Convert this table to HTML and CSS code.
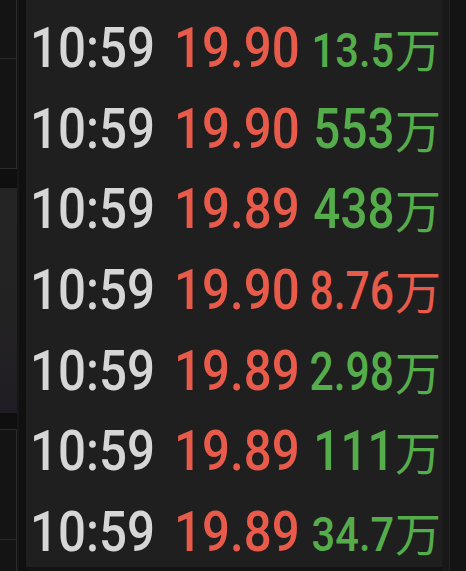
FILE: index.html
```html
<!DOCTYPE html>
<html lang="zh">
<head>
<meta charset="utf-8">
<link rel="stylesheet" href="styles.css">
</head>
<body>
<div class="page">
  <div class="side-left">
    <div class="sl-panel sl-a"></div>
    <div class="sl-panel sl-b"></div>
    <div class="sl-band"></div>
    <div class="sl-grey"></div>
    <div class="sl-band sl-band2"></div>
    <div class="sl-panel sl-c"></div>
    <div class="sl-panel sl-d"></div>
  </div>
  <div class="gutter"></div>
  <div class="ticks">
    <div class="row"><span class="time">10:59</span><span class="price up">19.90</span><span class="vol down v-s"><span class="num">13.5</span><span class="wan">万</span></span></div>
    <div class="row"><span class="time">10:59</span><span class="price up">19.90</span><span class="vol down"><span class="num">553</span><span class="wan">万</span></span></div>
    <div class="row"><span class="time">10:59</span><span class="price up">19.89</span><span class="vol down"><span class="num">438</span><span class="wan">万</span></span></div>
    <div class="row"><span class="time">10:59</span><span class="price up">19.90</span><span class="vol up v-m"><span class="num">8.76</span><span class="wan">万</span></span></div>
    <div class="row"><span class="time">10:59</span><span class="price up">19.89</span><span class="vol down v-m"><span class="num">2.98</span><span class="wan">万</span></span></div>
    <div class="row"><span class="time">10:59</span><span class="price up">19.89</span><span class="vol down"><span class="num">111</span><span class="wan">万</span></span></div>
    <div class="row"><span class="time">10:59</span><span class="price up">19.89</span><span class="vol down v-s"><span class="num">34.7</span><span class="wan">万</span></span></div>
  </div>
  <div class="side-right"><div class="sr-inner"></div></div>
</div>
</body>
</html>
```
FILE: styles.css
```css
html, body {
  margin: 0;
  padding: 0;
  background: #131313;
}
.page {
  display: grid;
  grid-template-columns: 17px 9px 416px 24px;
  height: 571px;
  overflow: hidden;
}
.side-left {
  display: flex;
  flex-direction: column;
  background: #141414;
}
.sl-panel {
  background: #141414;
  border-right: 1px solid #2a2a2a;
  border-bottom: 1px solid #2a2a2a;
}
.sl-a { height: 58px; }
.sl-b { height: 109px; }
.sl-band { height: 19px; background: #0f0f0f; margin-right: -1px; }
.sl-grey {
  height: 225px;
  background: linear-gradient(180deg, #242424 0%, #232223 60%, #1f1d23 100%);
  margin-right: -1px;
}
.sl-band2 { height: 16px; }
.sl-c { height: 109px; border-top: 1px solid #2a2a2a; }
.sl-d { flex: 1; border-bottom: none; }
.gutter {
  background: #101010;
  border-left: 2px solid #171717;
}
.ticks {
  background: #1f1f1f;
  height: 567px;
  padding: 7px 1px 0 4px;
  box-sizing: border-box;
  display: flex;
  flex-direction: column;
  font-family: Roboto, "Noto Sans CJK SC", sans-serif;
  font-size: 56px;
  font-weight: 500;
}
.row {
  height: 80.67px;
  line-height: 80.67px;
  display: flex;
  align-items: baseline;
  white-space: nowrap;
}
.time,
.price {
  display: inline-block;
  flex: none;
  transform: scaleX(0.88);
  transform-origin: left center;
}
.time {
  width: 144px;
  color: #d6d6d6;
}
.price {
  width: 125px;
}
.vol {
  flex: 1;
  min-width: 0;
  display: flex;
  justify-content: flex-end;
  align-items: baseline;
}
.num {
  display: inline-block;
  transform: scaleX(0.85);
  transform-origin: right center;
}
.v-s { font-size: 49px; }
.v-m { font-size: 54px; }
.v-m .num { transform: scaleX(0.79); }
.wan {
  font-family: "Noto Sans CJK SC", sans-serif;
  font-size: 46px;
  font-weight: 400;
  margin-left: 1px;
}
.up { color: #e85a4a; }
.down { color: #55ac4a; }
.side-right {
  background: #181818;
  padding-left: 7px;
}
.sr-inner {
  height: 100%;
  background: #141414;
  border-left: 1px solid #242424;
}
```
